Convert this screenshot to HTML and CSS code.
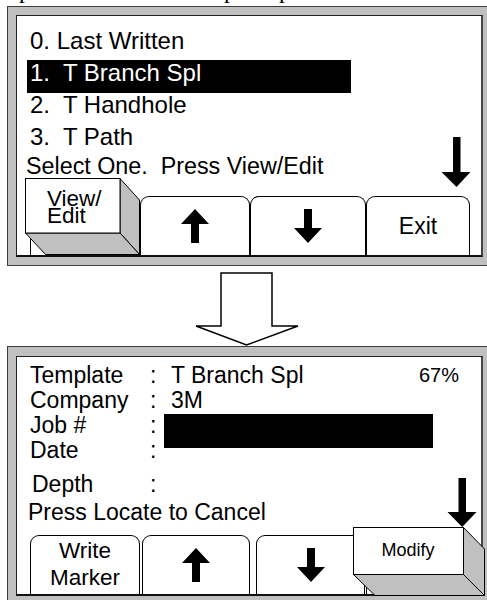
FILE: index.html
```html
<!DOCTYPE html>
<html lang="en">
<head>
  <meta charset="UTF-8" />
  <meta name="viewport" content="width=device-width, initial-scale=1.0" />
  <title>Marker Templates</title>
  <link rel="stylesheet" href="styles.css">
</head>
<body>
  <!-- last line of the caption above, cut off by the crop -->
  <div class="cut-caption">
    <div class="cut-line"><span>p</span><span>p</span><span>p</span></div>
  </div>

  <!-- Screen 1: pick a template -->
  <div class="frame frame-top">
    <div class="screen">
      <ul class="menu">
        <li>0. Last Written</li>
        <li class="selected">1.  T Branch Spl</li>
        <li>2.  T Handhole</li>
        <li>3.  T Path</li>
      </ul>
      <p class="prompt">Select One.  Press View/Edit</p>

      <svg class="pointer" width="30" height="50" viewBox="0 0 30 50">
        <rect x="12" y="0" width="7.5" height="36" />
        <polygon points="0.5,35 29.5,35 15.5,50" />
      </svg>

      <div class="softkeys softkeys-top">
        <div class="tab t-110">
          <div class="key3d key-view">
            <svg width="115" height="77" viewBox="0 0 115 77">
              <polygon class="face-dark" points="95,0.5 114.5,22 114.5,76.5 95,55" />
              <polygon class="face-dark" points="0.5,55 95,55 114.5,76.5 20.5,76.5" />
              <rect class="face-front" x="0.5" y="0.5" width="94.5" height="54.5" />
            </svg>
            <span class="key-label"><span class="key-line">View/</span><span class="key-line">Edit</span></span>
          </div>
        </div>
        <div class="tab t-110">
          <svg class="arrow" width="28" height="34" viewBox="0 0 28 34">
            <polygon points="14,0 28,15 18,15 18,34 10,34 10,15 0,15" />
          </svg>
        </div>
        <div class="tab t-116">
          <svg class="arrow" width="28" height="34" viewBox="0 0 28 34">
            <polygon points="14,34 28,19 18,19 18,0 10,0 10,19 0,19" />
          </svg>
        </div>
        <div class="tab t-104">Exit</div>
      </div>
    </div>
  </div>

  <!-- hollow arrow between the two screens -->
  <div class="transition">
    <svg width="104" height="80" viewBox="0 0 104 80">
      <polygon points="26,7 77,7 77,60 103,60 51.5,79 1,60 26,60" />
    </svg>
  </div>

  <!-- Screen 2: template details -->
  <div class="frame frame-bottom">
    <div class="screen">
      <div class="fields">
        <div class="field">
          <span>Template</span><span>:</span><span>T Branch Spl</span><span class="percent">67%</span>
        </div>
        <div class="field">
          <span>Company</span><span>:</span><span>3M</span>
        </div>
        <div class="field">
          <span>Job #</span><span>:</span><span><i class="redacted"></i></span>
        </div>
        <div class="field">
          <span>Date</span><span>:</span><span></span>
        </div>
        <div class="field field-depth">
          <span>Depth</span><span>:</span><span></span>
        </div>
      </div>
      <p class="prompt prompt-cancel">Press Locate to Cancel</p>

      <svg class="pointer" width="30" height="50" viewBox="0 0 30 50">
        <rect x="11.5" y="0" width="7.5" height="35" />
        <polygon points="0.5,34 29.5,34 15.2,49" />
      </svg>

      <div class="softkeys softkeys-bottom">
        <div class="tab t-110 tab-two-line">Write<br>Marker</div>
        <div class="tab t-108 gap-2">
          <svg class="arrow" width="28" height="34" viewBox="0 0 28 34">
            <polygon points="14,0 28,15 18,15 18,34 10,34 10,15 0,15" />
          </svg>
        </div>
        <div class="tab t-109 gap-6">
          <svg class="arrow" width="28" height="34" viewBox="0 0 28 34">
            <polygon points="14,34 28,19 18,19 18,0 10,0 10,19 0,19" />
          </svg>
        </div>
        <div class="tab t-104 gap-1">
          <div class="key3d key-modify">
            <svg width="132" height="69" viewBox="0 0 132 69">
              <polygon class="face-dark" points="110.5,0.5 131.5,22 131.5,68.5 110.5,47.5" />
              <polygon class="face-dark" points="0.5,47.5 110.5,47.5 131.5,68.5 22,68.5" />
              <rect class="face-front" x="0.5" y="0.5" width="110" height="47" />
            </svg>
            <span class="key-label">Modify</span>
          </div>
        </div>
      </div>
    </div>
  </div>
</body>
</html>
```

FILE: styles.css
```css
:root {
  --cinza: #c0c0c0;
  --borda-escura: #3c3c3c;
  --texto: #000000;
}

* {
  box-sizing: border-box;
  margin: 0;
  padding: 0;
}

body {
  font-family: "Liberation Sans", Arial, sans-serif;
  color: var(--texto);
  background: #ffffff;
  width: 487px;
  height: 600px;
  overflow: hidden;
}

/* caption line cut by the crop, only the descenders show */
.cut-caption {
  height: 6px;
  overflow: hidden;
  font-family: "Liberation Serif", "Times New Roman", serif;
  font-size: 24px;
  line-height: 24px;
}

.cut-line {
  display: flex;
  margin-top: -22px;
}

.cut-line span:nth-child(1) { margin-left: 19px; }
.cut-line span:nth-child(2) { margin-left: 193px; }
.cut-line span:nth-child(3) { margin-left: 43px; }

/* grey bezel round each screen */
.frame {
  margin-left: 7px;
  background: var(--cinza);
  border: 1px solid var(--borda-escura);
  border-right: none;
  padding: 8px 4px 8px 8px;
}

.frame-bottom {
  border-bottom: none;
  padding: 9px 4px 4px 8px;
}

.screen {
  position: relative;
  display: flex;
  flex-direction: column;
  background: #ffffff;
  border: 1px solid #222222;
  border-right: 2px solid #444444;
  border-bottom: 2px solid #111111;
  padding-left: 13px;
}

.frame-top .screen { height: 242px; }
.frame-bottom .screen { height: 240px; }

/* template list */
.menu {
  list-style: none;
  padding-top: 12px;
}

.menu li {
  width: 324px;
  height: 32px;
  margin-left: -3px;
  padding-left: 3px;
  font-size: 24px;
  line-height: 26px;
  white-space: pre;
}

.menu li.selected {
  background: #000000;
  color: #ffffff;
  height: 33px;
  margin-bottom: -1px;
}

.prompt {
  margin-left: -4px;
  font-size: 23.3px;
  line-height: 20px;
  white-space: pre;
}

.prompt-cancel {
  margin-left: -2px;
  margin-top: 3px;
  font-size: 23px;
  line-height: 25px;
}

/* little down arrow at the right of the prompt */
.pointer {
  position: absolute;
  top: 121px;
  left: 424px;
  fill: #000000;
}

.frame-bottom .pointer {
  left: 429.5px;
}

/* soft keys along the bottom of the screen */
.softkeys {
  display: flex;
  height: 59px;
  margin-top: auto;
}

.tab {
  position: relative;
  display: flex;
  align-items: center;
  justify-content: center;
  border: 1px solid #000000;
  border-bottom: none;
  border-radius: 9px 9px 0 0;
  background: #ffffff;
  font-size: 23px;
}

.t-104 { width: 104px; }
.t-108 { width: 108px; }
.t-109 { width: 109px; }
.t-110 { width: 110px; }
.t-116 { width: 116px; }

.gap-1 { margin-left: 1px; }
.gap-2 { margin-left: 2px; }
.gap-6 { margin-left: 6px; }

.tab-two-line {
  text-align: center;
  font-size: 22.5px;
  line-height: 26.7px;
}

.arrow {
  fill: #000000;
}

/* raised 3D key drawn over a tab */
.key3d {
  position: absolute;
}

.key3d svg {
  position: absolute;
  top: 0;
  left: 0;
}

.face-dark {
  fill: var(--cinza);
  stroke: #000000;
  stroke-width: 1;
}

.face-front {
  fill: #ffffff;
  stroke: #000000;
  stroke-width: 1;
}

.key-label {
  position: relative;
  display: block;
}

.key-view {
  left: -6px;
  top: -19px;
  width: 115px;
  height: 77px;
}

.key-view .key-label {
  width: 95px;
  padding: 12px 0 0 22px;
  font-size: 22.5px;
}

.key-line {
  display: block;
  height: 17px;
  line-height: 17px;
}

.key-modify {
  left: -14px;
  top: -9px;
  width: 132px;
  height: 69px;
}

.key-modify .key-label {
  display: flex;
  align-items: center;
  justify-content: center;
  width: 110px;
  height: 47px;
  font-size: 18px;
}

/* hollow arrow between screens */
.transition {
  height: 80px;
  padding-left: 195px;
}

.transition svg {
  display: block;
  fill: #ffffff;
  stroke: #000000;
  stroke-width: 1.5;
}

/* detail fields */
.fields {
  padding-top: 6px;
}

.field {
  display: grid;
  grid-template-columns: 120px 21px 1fr auto;
  font-size: 23px;
  line-height: 25px;
}

.field-depth {
  margin-top: 8.5px;
}

.field-depth span:first-child {
  padding-left: 2px;
}

.percent {
  padding-right: 22px;
  font-size: 20px;
}

.redacted {
  display: block;
  width: 269px;
  height: 34px;
  margin: 1px 0 -10px -7px;
  background: #000000;
}
```
